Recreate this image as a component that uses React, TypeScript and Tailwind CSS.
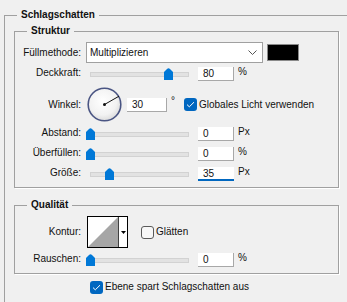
import React from "react";

function Slider({ left }: { left: number }) {
  return (
    <div className="relative ml-[9px] h-[14px] w-[99px] shrink-0">
      <div className="absolute left-0 right-0 top-[5px] h-[5px] border border-[#d2d2d2] bg-[#e2e2e2]" />
      <svg
        className="absolute top-[1px]"
        style={{ left: left }}
        width="9"
        height="12"
        viewBox="0 0 9 12"
      >
        <path d="M0 4 L3 0.9 Q4.5 -0.3 6 0.9 L9 4 V12 H0 Z" fill="#0078d7" />
      </svg>
    </div>
  );
}

function NumInput({ value, focused }: { value: string; focused?: boolean }) {
  return (
    <div
      className={
        "ml-[9px] h-[14px] w-[36px] shrink-0 bg-white pl-[5px] leading-[14px] " +
        (focused ? "border-b-2 border-[#0067c0]" : "border-b border-r border-[#a8a8a8]")
      }
    >
      {value}
    </div>
  );
}

function Check({ checked }: { checked: boolean }) {
  if (checked) {
    return (
      <div className="flex h-[13px] w-[13px] shrink-0 items-center justify-center rounded-[3px] bg-[#0067c0]">
        <svg width="9" height="7" viewBox="0 0 9 7">
          <path d="M1 3.6 L3.3 5.8 L8 1.2" stroke="white" strokeWidth="1" fill="none" />
        </svg>
      </div>
    );
  }
  return <div className="h-[13px] w-[13px] shrink-0 rounded-[3px] border border-[#5a5a5a] bg-[#f7f7f7]" />;
}

function SliderRow({
  label,
  left,
  value,
  unit,
  focused,
}: {
  label: string;
  left: number;
  value: string;
  unit: string;
  focused?: boolean;
}) {
  return (
    <div className="flex h-[14px] items-center">
      <div className="-mt-[3px] w-[66px] shrink-0 text-right">{label}</div>
      <Slider left={left} />
      <NumInput value={value} focused={focused} />
      <div className="ml-[4px] -mt-[5px]">{unit}</div>
    </div>
  );
}

export default function App() {
  return (
    <div className="h-[302px] w-[347px] overflow-hidden bg-[#f0f0f0] pt-[8px] font-['Liberation_Sans',Arial,sans-serif] text-[10px] leading-[14px] text-[#111]">
      <fieldset className="ml-[4px] h-[320px] w-[360px] border border-[#a0a0a0]">
        <legend className="ml-[12px] px-[4px] font-bold leading-[14px]">Schlagschatten</legend>

        <fieldset className="ml-[9px] mt-[2px] w-[325px] border border-[#a0a0a0] pb-[6px] pt-[4px] shadow-[1px_1px_0_#fff]">
          <legend className="ml-[12px] px-[4px] font-bold leading-[14px]">Struktur</legend>

          <div className="flex h-[21px] items-center">
            <div className="w-[66px] shrink-0 text-right">Füllmethode:</div>
            <div className="ml-[5px] flex h-[21px] w-[177px] shrink-0 items-center justify-between border border-[#a0a0a0] bg-white pl-[3px] pr-[5px]">
              <span>Multiplizieren</span>
              <svg width="9" height="6" viewBox="0 0 9 6">
                <path d="M0.5 0.5 L4.5 4.5 L8.5 0.5" stroke="#555" strokeWidth="1" fill="none" />
              </svg>
            </div>
            <div className="ml-[4px] h-[17px] w-[32px] shrink-0 border border-[#8a8a8a] bg-black" />
          </div>

          <div className="mt-[4px]">
            <SliderRow label="Deckkraft:" left={74} value="80" unit="%" />
          </div>

          <div className="mt-[6px] flex h-[35px] items-center">
            <div className="w-[66px] shrink-0 text-right">Winkel:</div>
            <svg className="ml-[6px] shrink-0" width="35" height="35" viewBox="0 0 35 35">
              <defs>
                <radialGradient id="dialg" cx="45%" cy="40%" r="60%">
                  <stop offset="0%" stopColor="#ffffff" />
                  <stop offset="70%" stopColor="#f2f2f2" />
                  <stop offset="100%" stopColor="#dcdcdc" />
                </radialGradient>
              </defs>
              <circle cx="17.5" cy="17.5" r="16.3" fill="url(#dialg)" stroke="#4a5583" strokeWidth="1.6" />
              <line x1="17.5" y1="17.5" x2="32" y2="9.2" stroke="#111" strokeWidth="1" />
              <circle cx="17.5" cy="17.5" r="1.5" fill="#111" />
            </svg>
            <div className="ml-[5px] h-[14px] w-[40px] shrink-0 border-b border-r border-[#a8a8a8] bg-white pl-[5px] leading-[14px]">
              30
            </div>
            <div className="ml-[4px] -mt-[8px]">°</div>
            <div className="ml-[9px]">
              <Check checked />
            </div>
            <div className="ml-[2px]">Globales Licht verwenden</div>
          </div>

          <div className="mt-[5px]">
            <SliderRow label="Abstand:" left={-4} value="0" unit="Px" />
          </div>
          <div className="mt-[6px]">
            <SliderRow label="Überfüllen:" left={-4} value="0" unit="%" />
          </div>
          <div className="mt-[6px]">
            <SliderRow label="Größe:" left={15} value="35" unit="Px" focused />
          </div>
        </fieldset>

        <fieldset className="ml-[9px] mt-[10px] w-[325px] border border-[#a0a0a0] pb-[6px] pt-[4px] shadow-[1px_1px_0_#fff]">
          <legend className="ml-[12px] px-[4px] font-bold leading-[14px]">Qualität</legend>

          <div className="flex h-[32px] items-center">
            <div className="w-[66px] shrink-0 text-right">Kontur:</div>
            <div className="ml-[6px] flex h-[32px] w-[41px] shrink-0 border border-black bg-white">
              <svg width="30" height="30" viewBox="0 0 30 30" className="shrink-0">
                <polygon points="0,30 30,0 30,30" fill="#a6a6a6" />
              </svg>
              <div className="w-px bg-[#404040]" />
              <div className="flex flex-1 items-center justify-center">
                <svg width="5" height="3" viewBox="0 0 5 3">
                  <polygon points="0,0 5,0 2.5,3" fill="#000" />
                </svg>
              </div>
            </div>
            <div className="ml-[13px]">
              <Check checked={false} />
            </div>
            <div className="ml-[2px]">Glätten</div>
          </div>

          <div className="mt-[5px]">
            <SliderRow label="Rauschen:" left={-4} value="0" unit="%" />
          </div>
        </fieldset>

        <div className="ml-[85px] mt-[6px] flex items-center">
          <Check checked />
          <div className="ml-[2px]">Ebene spart Schlagschatten aus</div>
        </div>
      </fieldset>
    </div>
  );
}
